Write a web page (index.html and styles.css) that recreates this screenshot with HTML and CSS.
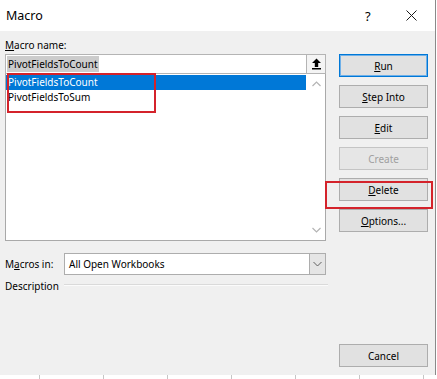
FILE: index.html
```html
<!DOCTYPE html>
<html>
<head>
<meta charset="utf-8">
<link rel="stylesheet" href="styles.css">
</head>
<body>
<div class="screen">
  <div class="dialog">
    <div class="titlebar">
      <span class="title">Macro</span>
      <span class="help">?</span>
      <span class="close"><svg width="11" height="11" viewBox="0 0 11 11"><path d="M0.5 0.5L10.5 10.5M10.5 0.5L0.5 10.5" stroke="#1a1a1a" stroke-width="1"/></svg></span>
    </div>
    <div class="content">
      <div class="left">
        <div class="label"><u>M</u>acro name:</div>
        <div class="namerow">
          <div class="nameinput"><span class="sel">PivotFieldsToCount</span></div>
          <div class="upbtn"><svg width="11" height="12" viewBox="0 0 11 12"><path d="M5.5 0.5L10 5H7.2V9H3.8V5H1Z" fill="#000"/><rect x="1" y="10" width="9" height="1.5" fill="#000"/></svg></div>
        </div>
        <div class="listbox">
          <div class="items">
            <div class="item selected">PivotFieldsToCount</div>
            <div class="item">PivotFieldsToSum</div>
          </div>
          <div class="scrollbar">
            <svg width="9" height="6" viewBox="0 0 9 6"><path d="M0.5 5L4.5 1L8.5 5" fill="none" stroke="#b4b4b4" stroke-width="1.2"/></svg>
            <svg width="9" height="6" viewBox="0 0 9 6"><path d="M0.5 1L4.5 5L8.5 1" fill="none" stroke="#b4b4b4" stroke-width="1.2"/></svg>
          </div>
        </div>
        <div class="inrow">
          <span class="inlabel">M<u>a</u>cros in:</span>
          <div class="select">
            <span class="selval">All Open Workbooks</span>
            <span class="dropbtn"><svg width="9" height="6" viewBox="0 0 9 6"><path d="M0.5 1L4.5 5L8.5 1" fill="none" stroke="#606060" stroke-width="1"/></svg></span>
          </div>
        </div>
        <div class="descrow">
          <span>Description</span>
          <span class="rule"></span>
        </div>
      </div>
      <div class="right">
        <div class="btn default"><u>R</u>un</div>
        <div class="btn"><u>S</u>tep Into</div>
        <div class="btn"><u>E</u>dit</div>
        <div class="btn disabled">Create</div>
        <div class="btn"><u>D</u>elete</div>
        <div class="btn"><u>O</u>ptions...</div>
        <div class="btn cancel">Cancel</div>
      </div>
    </div>
    <div class="mark mark-list"></div>
    <div class="mark mark-delete"></div>
  </div>
  <div class="grid"></div>
</div>
</body>
</html>
```
FILE: styles.css
```css
* { box-sizing: border-box; }
html, body { margin: 0; padding: 0; background: #fff; }
body { width: 437px; height: 379px; overflow: hidden; font-family: "Noto Sans", "Open Sans", sans-serif; font-size: 10px; color: #000; }
u { text-decoration: underline; text-underline-offset: 1px; }
.screen { width: 437px; height: 379px; display: flex; flex-direction: column; }
.dialog { position: relative; width: 436px; height: 375px; background: #f0f0f0; border-right: 1px solid #8a8a8a; display: flex; flex-direction: column; }
.titlebar { height: 31px; background: #fff; display: flex; align-items: center; padding-left: 6px; }
.title { font-size: 12.5px; flex: 1; }
.help { font-size: 13px; width: 12px; margin-right: 29px; }
.close { width: 11px; height: 11px; margin-right: 18px; display: flex; }
.content { flex: 1; display: flex; padding: 6px 0 8px 5px; gap: 13px; }
.left { width: 321px; display: flex; flex-direction: column; }
.label { height: 16px; line-height: 16px; margin-bottom: 1px; }
.namerow { display: flex; height: 20px; }
.nameinput { flex: 1; background: #fff; border: 1px solid #b4b4b4; border-right: none; display: flex; align-items: center; padding-left: 1px; }
.sel { background: #cccccc; line-height: 16px; padding: 0 1px; }
.upbtn { width: 20px; background: #f4f4f4; border: 1px solid #b4b4b4; display: flex; align-items: center; justify-content: center; }
.listbox { height: 167px; background: #fff; border: 1px solid #a9a9a9; border-top: none; display: flex; }
.items { flex: 1; padding-top: 1px; }
.item { height: 15px; line-height: 15px; padding-left: 2px; }
.item.selected { background: #0078d7; color: #fff; }
.scrollbar { width: 17px; margin-left: 2px; display: flex; flex-direction: column; justify-content: space-between; align-items: center; padding: 7px 0 7px 0; }
.inrow { display: flex; align-items: center; margin-top: 12px; height: 22px; }
.inlabel { width: 59px; }
.select { flex: 1; height: 22px; background: #fff; border: 1px solid #adadad; display: flex; align-items: center; }
.selval { flex: 1; padding-left: 4px; }
.dropbtn { width: 16px; height: 20px; background: #e5e5e5; border-left: 1px solid #adadad; display: flex; align-items: center; justify-content: center; }
.descrow { display: flex; align-items: center; height: 16px; margin-top: 3px; margin-right: -2px; }
.rule { flex: 1; margin-left: 5px; height: 2px; border-top: 1px solid #dadada; border-bottom: 1px solid #fbfbfb; margin-top: -2px; }
.right { width: 89px; display: flex; flex-direction: column; padding-top: 17px; gap: 8px; }
.btn { height: 23px; background: #e1e1e1; border: 1px solid #adadad; display: flex; align-items: center; justify-content: center; color: #000; }
.btn.default { border-color: #0078d7; box-shadow: inset 0 0 0 1px #6fb0e8; }
.btn.disabled { background: #e6e6e6; border-color: #c4c4c4; color: #a0a0a0; }
.btn.cancel { margin-top: auto; }
.mark { position: absolute; border: 2px solid #d4232b; }
.mark-list { left: 7px; top: 73px; width: 149px; height: 40px; }
.mark-delete { left: 325px; top: 181px; width: 108px; height: 28px; }
.grid { flex: 1; background-color: #fff; background-image: linear-gradient(to right, #c6c6c6 1px, transparent 1px); background-size: 64px 100%; background-position: 39px 0; }
```
